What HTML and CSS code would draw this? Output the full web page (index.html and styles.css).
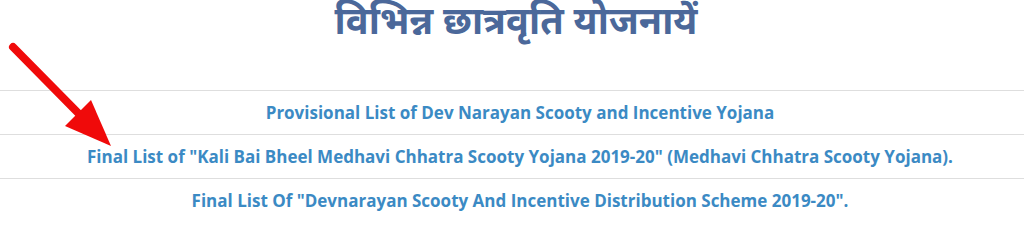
FILE: index.html
```html
<!DOCTYPE html>
<html lang="hi">
<head>
<meta charset="utf-8">
<link rel="stylesheet" href="styles.css">
</head>
<body>
<div class="page">
  <h1 class="title">विभिन्न छात्रवृति योजनायें</h1>
  <ul class="list">
    <li class="row"><a class="link" href="#">Provisional List of Dev Narayan Scooty and Incentive Yojana</a></li>
    <li class="row"><a class="link" href="#">Final List of "Kali Bai Bheel Medhavi Chhatra Scooty Yojana 2019-20" (Medhavi Chhatra Scooty Yojana).</a></li>
    <li class="row"><a class="link" href="#">Final List Of "Devnarayan Scooty And Incentive Distribution Scheme 2019-20".</a></li>
  </ul>
  <svg class="arrow" width="130" height="160" viewBox="0 0 130 160">
    <line x1="13" y1="47" x2="86" y2="121" stroke="#f00a0a" stroke-width="8" stroke-linecap="round"/>
    <polygon points="111,146 65,126 91,100" fill="#f00a0a"/>
  </svg>
</div>
</body>
</html>
```
FILE: styles.css
```css
html, body {
  margin: 0;
  padding: 0;
  background: #ffffff;
}
.page {
  position: relative;
  width: 1024px;
  height: 219px;
  overflow: hidden;
}
.title {
  margin: -5px 0 0 0;
  padding-left: 8px;
  height: 96px;
  box-sizing: border-box;
  text-align: center;
  font-family: "Noto Sans", "Noto Sans Devanagari", sans-serif;
  font-weight: 700;
  font-size: 38px;
  line-height: 48px;
  color: #4b689a;
  border-bottom: 1px solid #dedede;
}
.list {
  list-style: none;
  margin: 0;
  padding: 0;
}
.row {
  height: 43px;
  padding-left: 16px;
  display: flex;
  align-items: center;
  justify-content: center;
  border-bottom: 1px solid #dedede;
}
.link {
  font-family: "Open Sans", sans-serif;
  font-weight: 700;
  font-size: 17px;
  color: #3b8ac4;
  text-decoration: none;
}
.arrow {
  position: absolute;
  left: 0;
  top: 0;
}
```
